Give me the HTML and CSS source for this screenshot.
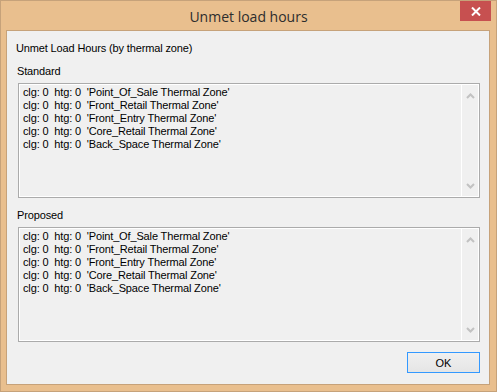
FILE: index.html
```html
<!DOCTYPE html>
<html>
<head>
<meta charset="utf-8">
<link rel="stylesheet" href="styles.css">
</head>
<body>
<div class="window">
  <div class="titlebar">
    <span class="title">Unmet load hours</span>
    <div class="close">
      <svg width="10" height="9" viewBox="0 0 10 9"><path d="M1 0.5 L9 8.5 M9 0.5 L1 8.5" stroke="#fff" stroke-width="2" fill="none"/></svg>
    </div>
  </div>
  <div class="client">
    <div class="heading">Unmet Load Hours (by thermal zone)</div>
    <div class="group-label">Standard</div>
    <div class="listbox">
      <div class="lines">clg: 0  htg: 0  'Point_Of_Sale Thermal Zone'
clg: 0  htg: 0  'Front_Retail Thermal Zone'
clg: 0  htg: 0  'Front_Entry Thermal Zone'
clg: 0  htg: 0  'Core_Retail Thermal Zone'
clg: 0  htg: 0  'Back_Space Thermal Zone'</div>
      <div class="scrollbar">
        <svg width="9" height="6" viewBox="0 0 9 6"><path d="M1 5 L4.5 1.5 L8 5" stroke="#c2c2c2" stroke-width="2" fill="none"/></svg>
        <svg width="9" height="6" viewBox="0 0 9 6"><path d="M1 1 L4.5 4.5 L8 1" stroke="#c2c2c2" stroke-width="2" fill="none"/></svg>
      </div>
    </div>
    <div class="group-label second">Proposed</div>
    <div class="listbox">
      <div class="lines">clg: 0  htg: 0  'Point_Of_Sale Thermal Zone'
clg: 0  htg: 0  'Front_Retail Thermal Zone'
clg: 0  htg: 0  'Front_Entry Thermal Zone'
clg: 0  htg: 0  'Core_Retail Thermal Zone'
clg: 0  htg: 0  'Back_Space Thermal Zone'</div>
      <div class="scrollbar">
        <svg width="9" height="6" viewBox="0 0 9 6"><path d="M1 5 L4.5 1.5 L8 5" stroke="#c2c2c2" stroke-width="2" fill="none"/></svg>
        <svg width="9" height="6" viewBox="0 0 9 6"><path d="M1 1 L4.5 4.5 L8 1" stroke="#c2c2c2" stroke-width="2" fill="none"/></svg>
      </div>
    </div>
    <div class="buttons">
      <button class="ok">OK</button>
    </div>
  </div>
</div>
</body>
</html>
```

FILE: styles.css
```css
html, body {
  margin: 0;
  padding: 0;
  background: #e9bf8e;
}
.window {
  position: relative;
  box-sizing: border-box;
  width: 497px;
  height: 392px;
  background: #e9bf8e;
  border: 1px solid #c6a27a;
  padding: 0 6px 6px 5px;
  display: flex;
  flex-direction: column;
}
.titlebar {
  height: 29px;
  display: flex;
  align-items: center;
  justify-content: center;
}
.title {
  font-family: "Open Sans", "Noto Sans", sans-serif;
  font-size: 14px;
  color: #2d2d2d;
  margin-top: 1px;
  margin-left: 1px;
}
.close {
  position: absolute;
  top: 0;
  right: 5px;
  width: 31px;
  height: 20px;
  background: #c75050;
  display: flex;
  align-items: center;
  justify-content: center;
}
.client {
  flex: 1;
  background: #f0f0f0;
  border: 1px solid #c6a27a;
  font-family: "Liberation Sans", Arial, sans-serif;
  font-size: 11px;
  letter-spacing: -0.14px;
  color: #000;
  display: flex;
  flex-direction: column;
  padding: 0 9px 0 11px;
}
.heading {
  margin-top: 11px;
  margin-left: -2px;
  line-height: 13px;
}
.group-label {
  margin-top: 10px;
  margin-left: -1px;
  line-height: 13px;
}
.group-label.second {
  margin-top: 11px;
}
.listbox {
  margin-top: 5px;
  height: 115px;
  box-sizing: border-box;
  border: 1px solid #ababab;
  box-shadow: inset 0 0 0 1px #ffffff;
  display: flex;
}
.lines {
  flex: 1;
  white-space: pre;
  line-height: 13px;
  padding: 2px 0 0 4px;
}
.scrollbar {
  width: 16px;
  margin: 1px 1px 1px 0;
  border-left: 1px solid #ffffff;
  display: flex;
  flex-direction: column;
  justify-content: space-between;
  align-items: center;
  padding: 8px 0 7px;
}
.scrollbar svg {
  display: block;
}
.buttons {
  display: flex;
  justify-content: flex-end;
  margin-top: 10px;
}
.ok {
  width: 73px;
  height: 21px;
  box-sizing: border-box;
  border: 1px solid #3399ff;
  background: linear-gradient(#f0f0f0, #e5e5e5);
  font-family: "Liberation Sans", Arial, sans-serif;
  font-size: 11px;
  color: #000;
  padding: 0;
  margin: 0;
}
```
